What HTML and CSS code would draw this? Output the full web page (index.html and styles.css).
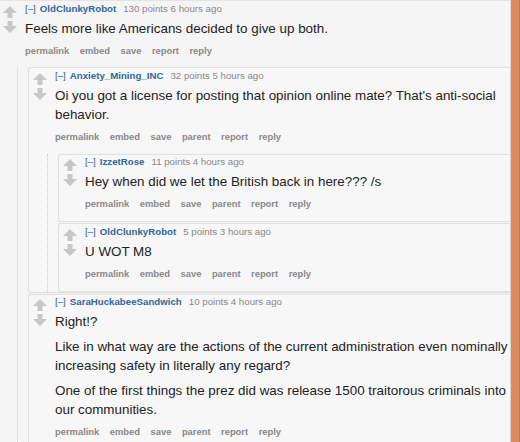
FILE: index.html
```html
<!DOCTYPE html>
<html lang="en">
<head>
<meta charset="utf-8">
<title>Comments</title>
<link rel="stylesheet" href="styles.css">
</head>
<body>
<div class="page">
  <div class="thread">
    <div class="comment top">
      <div class="midcol">
        <svg class="arrow" viewBox="0 0 14 12"><polygon points="7,0 14,7 9.5,7 9.5,12 4.5,12 4.5,7 0,7"/></svg>
        <svg class="arrow" viewBox="0 0 14 12"><polygon points="4.5,0 9.5,0 9.5,5 14,5 7,12 0,5 4.5,5"/></svg>
      </div>
      <div class="entry">
        <p class="tagline"><a class="expand">[–]</a><a class="author">OldClunkyRobot</a><span class="meta">130 points 6 hours ago</span></p>
        <div class="md"><p>Feels more like Americans decided to give up both.</p></div>
        <ul class="buttons"><li>permalink</li><li>embed</li><li>save</li><li>report</li><li>reply</li></ul>
      </div>
      <div class="child">
        <div class="comment box">
          <div class="midcol">
            <svg class="arrow" viewBox="0 0 14 12"><polygon points="7,0 14,7 9.5,7 9.5,12 4.5,12 4.5,7 0,7"/></svg>
            <svg class="arrow" viewBox="0 0 14 12"><polygon points="4.5,0 9.5,0 9.5,5 14,5 7,12 0,5 4.5,5"/></svg>
          </div>
          <div class="entry">
            <p class="tagline"><a class="expand">[–]</a><a class="author">Anxiety_Mining_INC</a><span class="meta">32 points 5 hours ago</span></p>
            <div class="md"><p>Oi you got a license for posting that opinion online mate? That's anti-social behavior.</p></div>
            <ul class="buttons"><li>permalink</li><li>embed</li><li>save</li><li>parent</li><li>report</li><li>reply</li></ul>
          </div>
          <div class="child">
            <div class="comment box">
              <div class="midcol">
                <svg class="arrow" viewBox="0 0 14 12"><polygon points="7,0 14,7 9.5,7 9.5,12 4.5,12 4.5,7 0,7"/></svg>
                <svg class="arrow" viewBox="0 0 14 12"><polygon points="4.5,0 9.5,0 9.5,5 14,5 7,12 0,5 4.5,5"/></svg>
              </div>
              <div class="entry">
                <p class="tagline"><a class="expand">[–]</a><a class="author">IzzetRose</a><span class="meta">11 points 4 hours ago</span></p>
                <div class="md"><p>Hey when did we let the British back in here??? /s</p></div>
                <ul class="buttons"><li>permalink</li><li>embed</li><li>save</li><li>parent</li><li>report</li><li>reply</li></ul>
              </div>
            </div>
            <div class="comment box">
              <div class="midcol">
                <svg class="arrow" viewBox="0 0 14 12"><polygon points="7,0 14,7 9.5,7 9.5,12 4.5,12 4.5,7 0,7"/></svg>
                <svg class="arrow" viewBox="0 0 14 12"><polygon points="4.5,0 9.5,0 9.5,5 14,5 7,12 0,5 4.5,5"/></svg>
              </div>
              <div class="entry">
                <p class="tagline"><a class="expand">[–]</a><a class="author">OldClunkyRobot</a><span class="meta">5 points 3 hours ago</span></p>
                <div class="md"><p>U WOT M8</p></div>
                <ul class="buttons"><li>permalink</li><li>embed</li><li>save</li><li>parent</li><li>report</li><li>reply</li></ul>
              </div>
            </div>
          </div>
        </div>
        <div class="comment box">
          <div class="midcol">
            <svg class="arrow" viewBox="0 0 14 12"><polygon points="7,0 14,7 9.5,7 9.5,12 4.5,12 4.5,7 0,7"/></svg>
            <svg class="arrow" viewBox="0 0 14 12"><polygon points="4.5,0 9.5,0 9.5,5 14,5 7,12 0,5 4.5,5"/></svg>
          </div>
          <div class="entry">
            <p class="tagline"><a class="expand">[–]</a><a class="author">SaraHuckabeeSandwich</a><span class="meta">10 points 4 hours ago</span></p>
            <div class="md">
              <p>Right!?</p>
              <p>Like in what way are the actions of the current administration even nominally increasing safety in literally any regard?</p>
              <p>One of the first things the prez did was release 1500 traitorous criminals into our communities.</p>
            </div>
            <ul class="buttons"><li>permalink</li><li>embed</li><li>save</li><li>parent</li><li>report</li><li>reply</li></ul>
          </div>
        </div>
      </div>
    </div>
  </div>
  <div class="edge"></div>
</div>
</body>
</html>
```

FILE: styles.css
```css
html, body {
  margin: 0;
  padding: 0;
  height: 100%;
  overflow: hidden;
}

body {
  font-family: "Liberation Sans", Arial, sans-serif;
  background: #f5f5f5;
}

.page {
  display: flex;
  height: 442px;
  overflow: hidden;
}

.thread {
  flex: 1;
  min-width: 0;
  background: #f5f5f5;
  border-top: 1px solid #e4e4e4;
  border-right: 1px solid #dcdcdc;
}

.edge {
  width: 8px;
  background: #d98b5d;
  border-right: 1px solid #c2774a;
}

.comment {
  display: grid;
  grid-template-columns: 22px 1fr;
  align-items: start;
}

.comment.top {
  padding: 2px 0 0 3px;
}

.comment.top > .entry {
  padding-bottom: 10px;
}

.comment.box {
  background: #f7f7f7;
  border: 1px solid #e1e1e1;
  border-right: none;
  border-radius: 3px 0 0 3px;
  box-shadow: 0 0 2px rgba(0, 0, 0, 0.04);
  padding: 1.5px 0 0 4px;
  margin-bottom: 1px;
}

.child > .comment.box:last-child {
  margin-bottom: 0;
}

.midcol {
  display: flex;
  flex-direction: column;
  gap: 3px;
  padding-top: 3px;
}

.arrow {
  width: 14px;
  height: 12px;
  fill: #c7c7c7;
  display: block;
}

.entry {
  padding-bottom: 11px;
  min-width: 0;
}

.tagline {
  margin: 0;
  font-size: 9.7px;
  line-height: 12px;
  color: #888;
  white-space: nowrap;
}

.expand {
  color: #369;
  margin-right: 4px;
}

.author {
  color: #369;
  font-weight: bold;
  margin-right: 7px;
}

.md {
  margin-top: 4px;
  font-size: 13.4px;
  line-height: 19px;
  color: #222;
}

.md p {
  margin: 0;
}

.md p + p {
  margin-top: 6px;
}

.buttons {
  list-style: none;
  margin: 6px 0 0;
  padding: 0;
  display: flex;
  gap: 10.5px;
  font-size: 9.4px;
  line-height: 13px;
  font-weight: bold;
  color: #888;
}

.child {
  grid-column: 1 / -1;
  margin-left: 14px;
  padding-left: 10px;
  border-left: 1px dotted #cfcfcf;
}
```
